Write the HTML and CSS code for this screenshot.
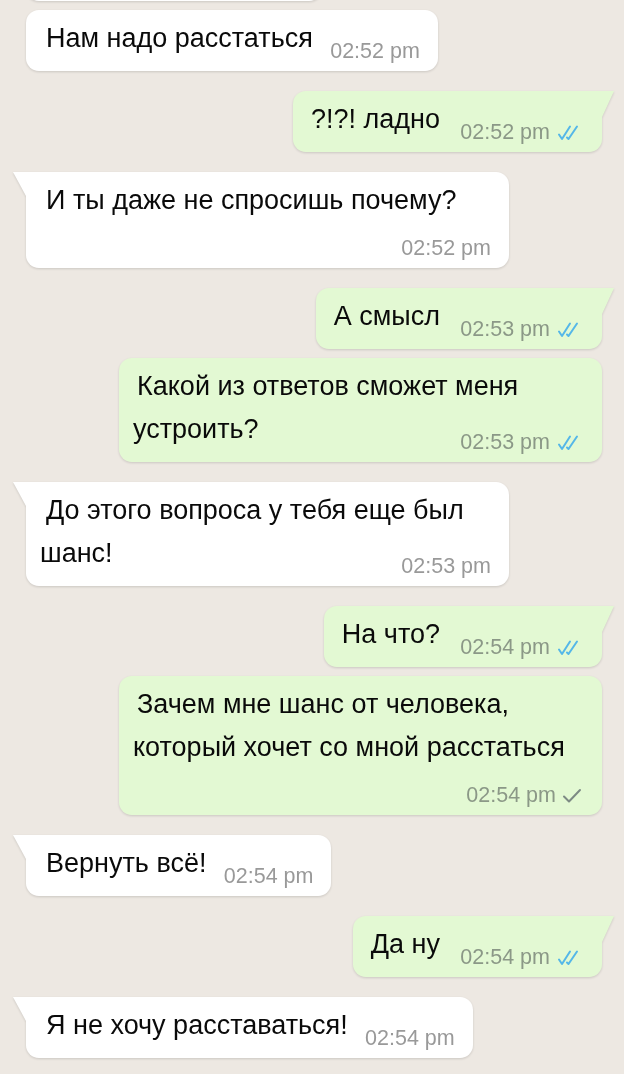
FILE: index.html
```html
<!DOCTYPE html>
<html lang="ru">
<head>
    <meta charset="UTF-8">
    <meta name="viewport" content="width=device-width, initial-scale=1.0">
    <title>Чат</title>
    <link rel="stylesheet" href="styles.css">
</head>
<body>
    <div class="chat">
        <div class="msg in cut"></div>

        <div class="msg in">
            <span class="text">Нам надо расстаться</span><span class="gap"></span>
            <span class="meta"><span class="time">02:52 pm</span></span>
        </div>

        <div class="msg out tail">
            <span class="text">?!?! ладно</span><span class="gap"></span>
            <span class="meta"><span class="time">02:52 pm</span><svg class="tick read" viewBox="0 0 26 16"><polyline points="3,9.5 6,14 14,1.5"/><polyline points="11,12.5 12.5,14 21,1.5"/></svg></span>
        </div>

        <div class="msg in tail">
            <span class="text">И ты даже не спросишь почему?</span><span class="gap"></span>
            <span class="meta"><span class="time">02:52 pm</span></span>
        </div>

        <div class="msg out tail">
            <span class="text">А смысл</span><span class="gap"></span>
            <span class="meta"><span class="time">02:53 pm</span><svg class="tick read" viewBox="0 0 26 16"><polyline points="3,9.5 6,14 14,1.5"/><polyline points="11,12.5 12.5,14 21,1.5"/></svg></span>
        </div>

        <div class="msg out">
            <span class="text">Какой из ответов сможет меня устроить?</span><span class="gap"></span>
            <span class="meta"><span class="time">02:53 pm</span><svg class="tick read" viewBox="0 0 26 16"><polyline points="3,9.5 6,14 14,1.5"/><polyline points="11,12.5 12.5,14 21,1.5"/></svg></span>
        </div>

        <div class="msg in tail">
            <span class="text">До этого вопроса у тебя еще был шанс!</span><span class="gap"></span>
            <span class="meta"><span class="time">02:53 pm</span></span>
        </div>

        <div class="msg out tail">
            <span class="text">На что?</span><span class="gap"></span>
            <span class="meta"><span class="time">02:54 pm</span><svg class="tick read" viewBox="0 0 26 16"><polyline points="3,9.5 6,14 14,1.5"/><polyline points="11,12.5 12.5,14 21,1.5"/></svg></span>
        </div>

        <div class="msg out">
            <span class="text">Зачем мне шанс от человека, который хочет со мной расстаться</span><span class="gap"></span>
            <span class="meta"><span class="time">02:54 pm</span><svg class="tick sent" viewBox="0 0 20 16"><polyline points="2,8.5 7,13.5 18,2"/></svg></span>
        </div>

        <div class="msg in tail">
            <span class="text">Вернуть всё!</span><span class="gap"></span>
            <span class="meta"><span class="time">02:54 pm</span></span>
        </div>

        <div class="msg out tail">
            <span class="text">Да ну</span><span class="gap"></span>
            <span class="meta"><span class="time">02:54 pm</span><svg class="tick read" viewBox="0 0 26 16"><polyline points="3,9.5 6,14 14,1.5"/><polyline points="11,12.5 12.5,14 21,1.5"/></svg></span>
        </div>

        <div class="msg in tail">
            <span class="text">Я не хочу расставаться!</span><span class="gap"></span>
            <span class="meta"><span class="time">02:54 pm</span></span>
        </div>
    </div>
</body>
</html>
```

FILE: styles.css
```css
body {
    margin: 0;
    height: 1074px;
    overflow: hidden;
    background: #ede8e2;
    font-family: 'Liberation Sans', Arial, sans-serif;
}

.chat {
    display: flex;
    flex-direction: column;
    margin-top: -69px;
    padding: 0 22px 0 26px;
}

.msg {
    position: relative;
    display: flow-root;
    width: fit-content;
    max-width: 483px;
    box-sizing: border-box;
    margin-top: 9px;
    padding: 7px 18px 11px 14px;
    text-indent: 6px;
    font-size: 27px;
    line-height: 43px;
    color: #0a0a0a;
    background: #fff;
    border-radius: 13px;
    filter: drop-shadow(0 1px 1px rgba(0, 0, 0, 0.14));
}

.msg.tail {
    margin-top: 20px;
}

.msg.out {
    align-self: flex-end;
    padding-right: 20px;
    text-indent: 4px;
    background: #e3f9d3;
}

.msg.cut {
    width: 296px;
    height: 61px;
}

/* little triangle on the first bubble of a group */
.msg.in.tail {
    border-top-left-radius: 0;
}

.msg.in.tail::before {
    content: "";
    position: absolute;
    top: 0;
    left: -13px;
    width: 13px;
    height: 24px;
    background: #fff;
    clip-path: polygon(0 0, 100% 0, 100% 100%);
}

.msg.out.tail {
    border-top-right-radius: 0;
}

.msg.out.tail::before {
    content: "";
    position: absolute;
    top: 0;
    right: -12px;
    width: 12px;
    height: 26px;
    background: #e3f9d3;
    clip-path: polygon(0 0, 100% 0, 0 100%);
}

/* keeps room for the time on the last line */
.gap {
    float: right;
    width: 107px;
    height: 35px;
}

.out .gap {
    width: 142px;
}

.meta {
    position: absolute;
    right: 18px;
    bottom: 9px;
    display: flex;
    align-items: center;
    gap: 6px;
    text-indent: 0;
    white-space: nowrap;
}

.out .meta {
    right: 20px;
}

.time {
    font-size: 21.5px;
    line-height: 21px;
    color: #999;
}

.out .time {
    color: #8b9887;
}

.tick {
    width: 26px;
    height: 16px;
    fill: none;
    stroke-width: 2;
    stroke-linecap: round;
    stroke-linejoin: round;
}

.tick.read {
    stroke: #55b7e8;
}

.tick.sent {
    width: 20px;
    stroke: #7d8a84;
}
```
